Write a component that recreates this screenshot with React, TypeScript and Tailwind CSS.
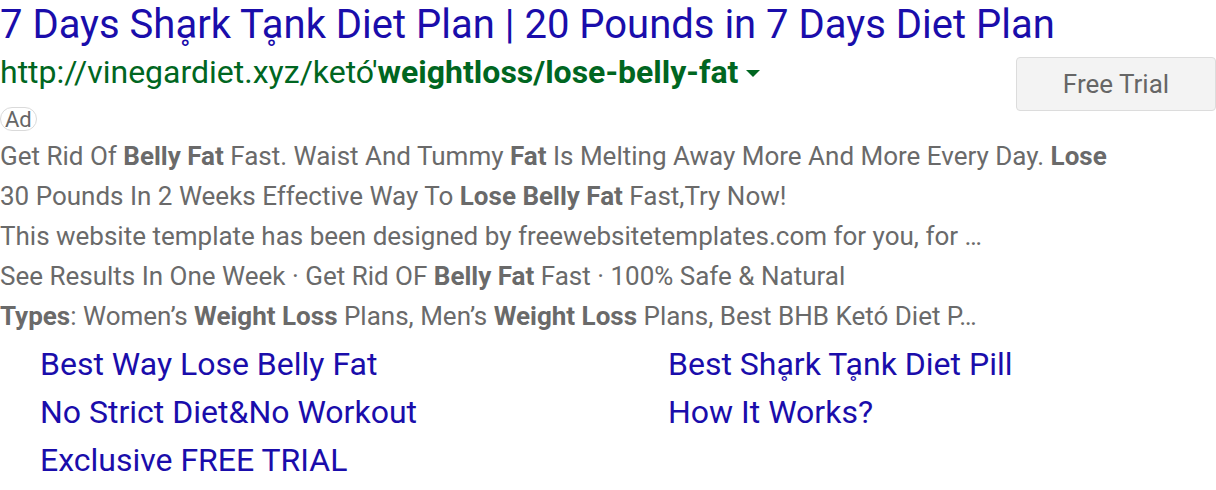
export default function App() {
  const desc = "text-[#6a6a6a]";
  return (
    <div className="w-[1216px] h-[490px] bg-white overflow-hidden font-['Roboto',sans-serif]">
      <div className="text-[40px] leading-[50px] text-[#1a0dab] whitespace-nowrap">
        7 Days Sh&#x1E01;rk T&#x1E01;nk Diet Plan | 20 Pounds in 7 Days Diet Plan
      </div>
      <div className="flex justify-between">
        <div>
          <div className="flex items-center text-[32px] leading-[44px] text-[#006621] whitespace-nowrap">
            <span>
              http://vinegardiet.xyz/ketó'<b className="font-bold">weightloss/lose-belly-fat</b>
            </span>
            <span className="ml-[8px] mt-[2px] w-0 h-0 border-l-[7px] border-r-[7px] border-t-[7px] border-l-transparent border-r-transparent border-t-[#006621]" />
          </div>
          <div className="mt-[13px] inline-flex items-center h-[24px] px-[4px] rounded-[12px] border border-[#dadada] text-[22px] text-[#666]">
            Ad
          </div>
        </div>
        <button className="mt-[7px] w-[200px] h-[54px] rounded-[4px] border border-[#dcdcdc] bg-[#f3f3f3] text-[26px] text-[#666]">
          Free Trial
        </button>
      </div>
      <div className={`mt-[2px] text-[26px] leading-[40px] ${desc} whitespace-nowrap`}>
        <div>
          Get Rid Of <b>Belly Fat</b> Fast. Waist And Tummy <b>Fat</b> Is Melting Away More And More Every Day. <b>Lose</b>
        </div>
        <div>
          30 Pounds In 2 Weeks Effective Way To <b>Lose Belly Fat</b> Fast,Try Now!
        </div>
        <div>This website template has been designed by freewebsitetemplates.com for you, for …</div>
        <div>
          See Results In One Week · Get Rid OF <b>Belly Fat</b> Fast · 100% Safe &amp; Natural
        </div>
        <div>
          <b>Types</b>: Women’s <b>Weight Loss</b> Plans, Men’s <b>Weight Loss</b> Plans, Best BHB Ketó Diet P…
        </div>
      </div>
      <div className="mt-[4px] grid grid-cols-[628px_1fr] pl-[40px] text-[32px] leading-[48px] text-[#1a0dab] whitespace-nowrap">
        <div>Best Way Lose Belly Fat</div>
        <div>Best Sh&#x1E01;rk T&#x1E01;nk Diet Pill</div>
        <div>No Strict Diet&amp;No Workout</div>
        <div>How It Works?</div>
        <div>Exclusive FREE TRIAL</div>
      </div>
    </div>
  );
}
